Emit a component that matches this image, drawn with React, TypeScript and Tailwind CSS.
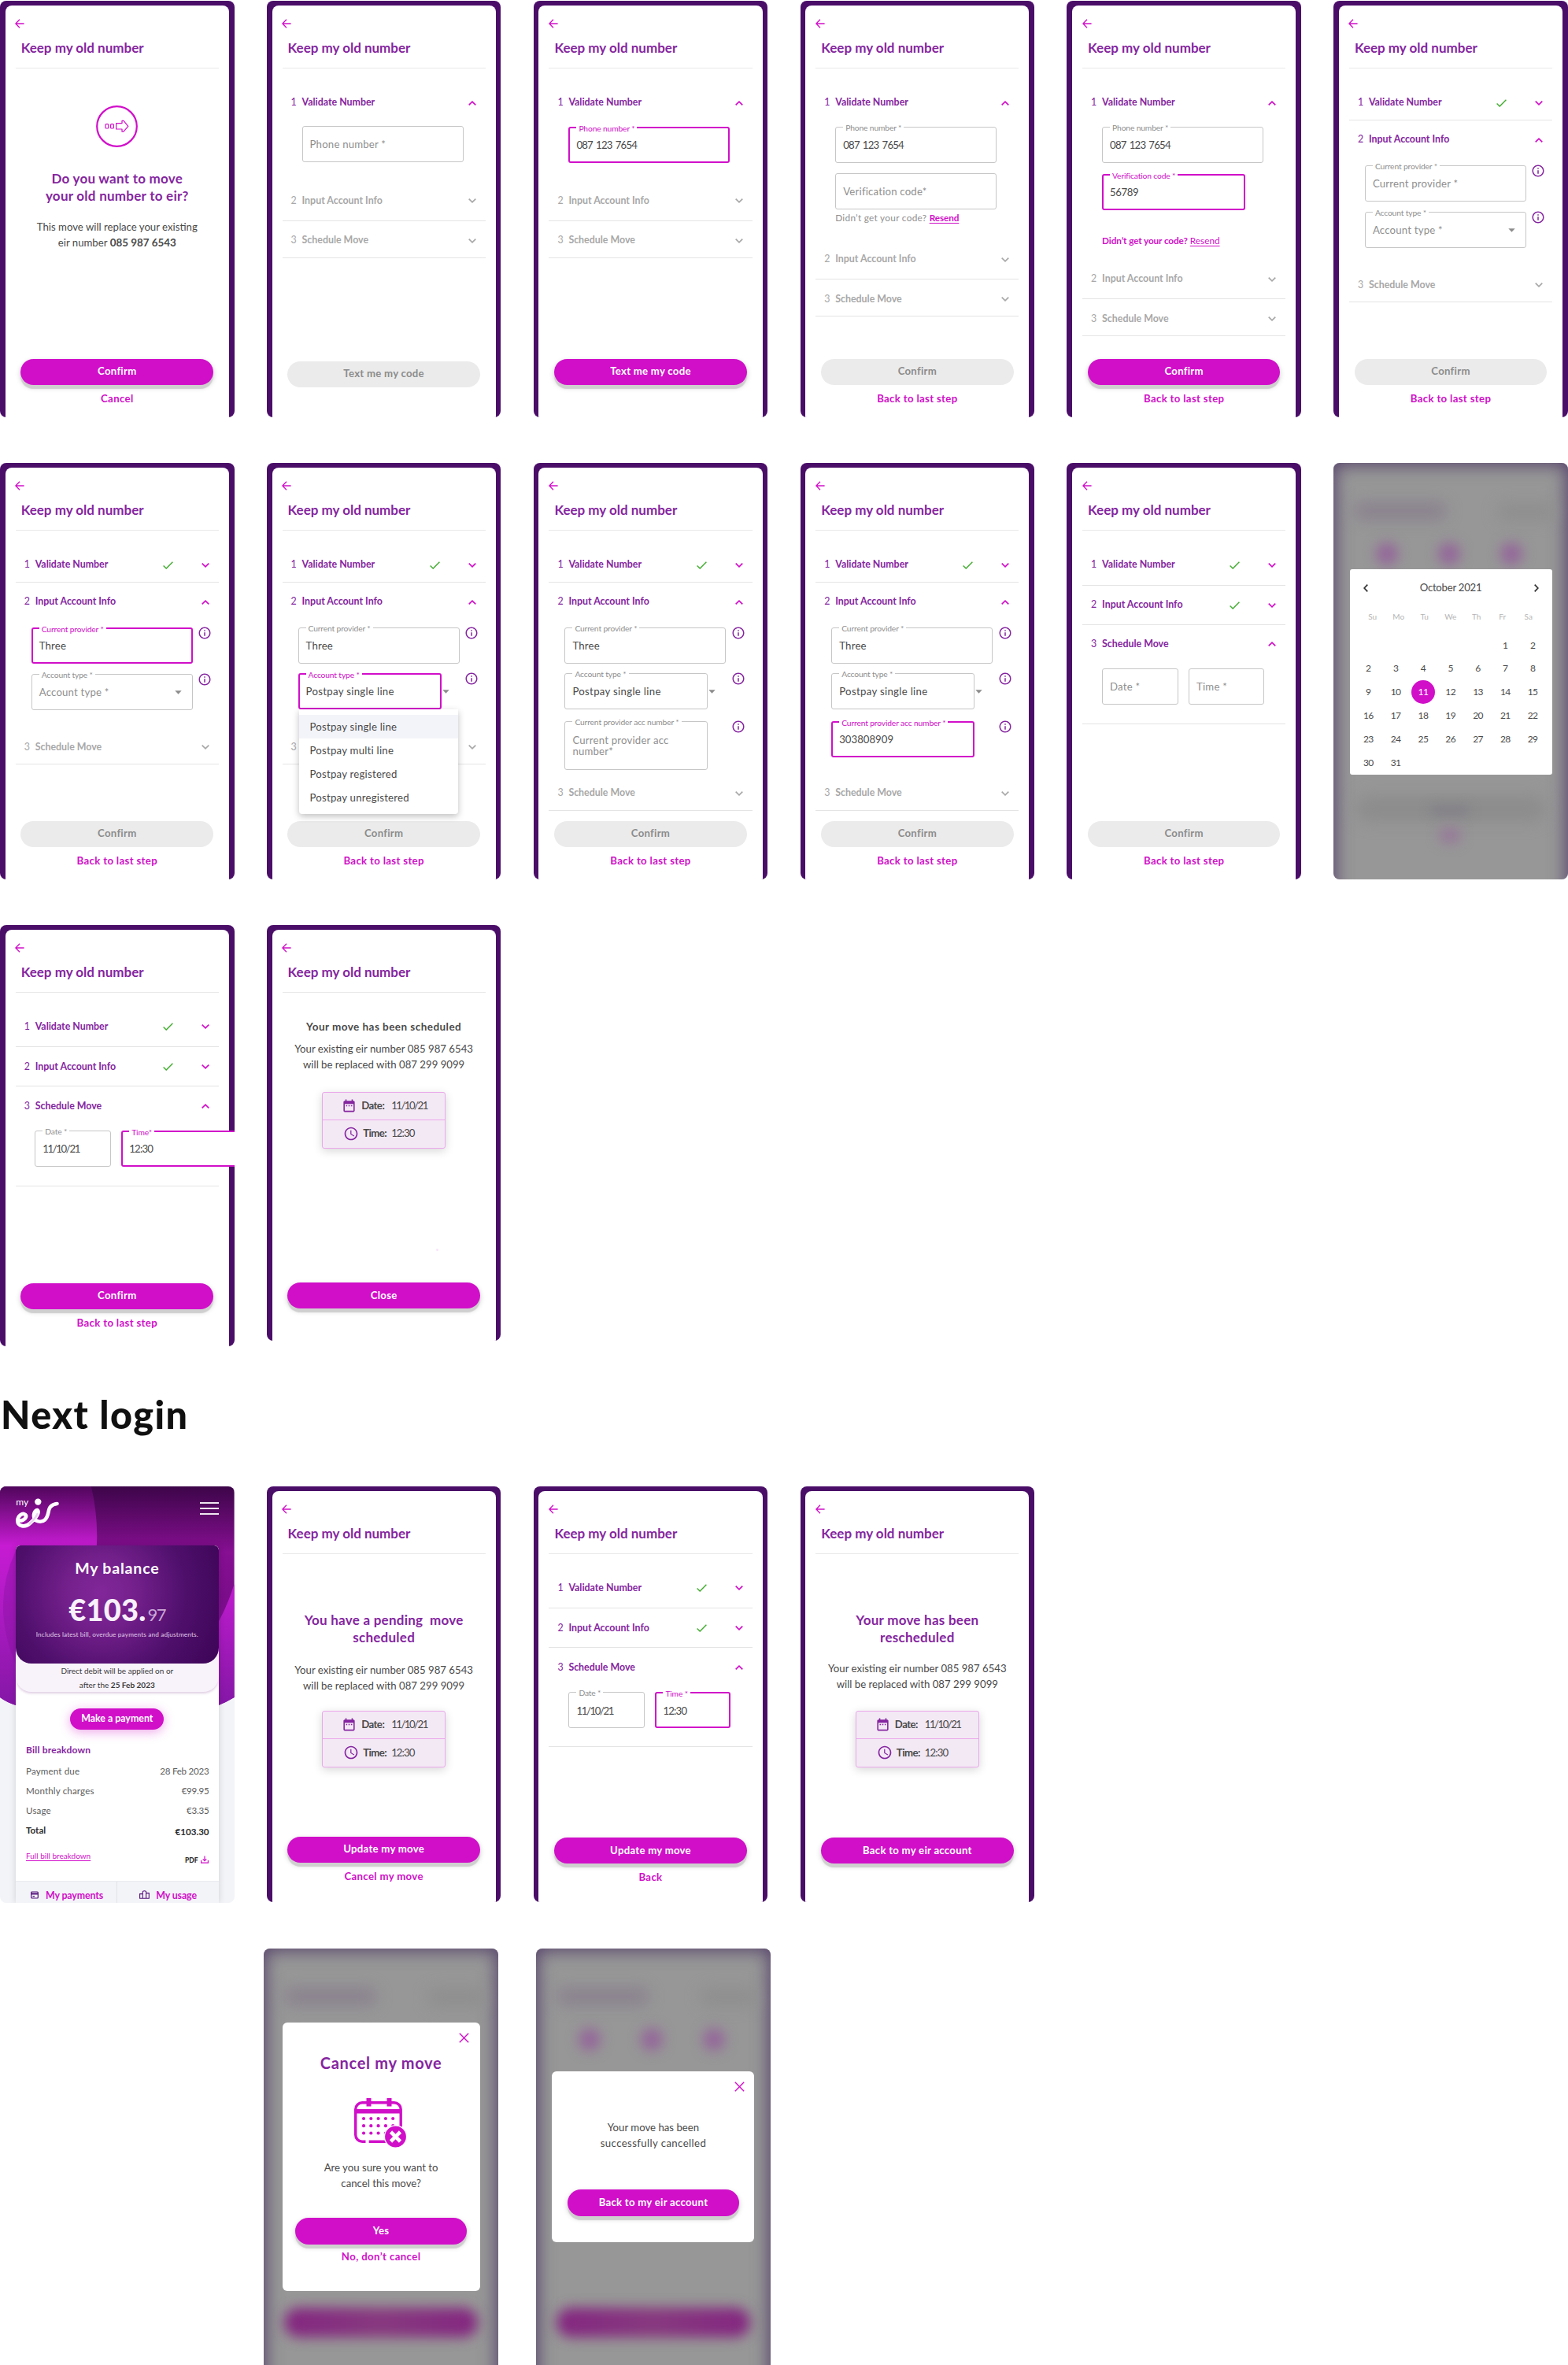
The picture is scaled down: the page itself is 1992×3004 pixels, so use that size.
import type { ReactNode } from "react";
import { MdAccessTime, MdDateRange, MdInfoOutline } from "react-icons/md";

function BackArrow() {
  return (
    <svg className="ml-[-0.5px] h-[12px] w-[12px] text-[#d10fc9]" viewBox="0 0 12 12" fill="none" stroke="currentColor" strokeWidth="1.3">
      <path d="M11.6 6H1M6 .8L.9 6 6 11.2" />
    </svg>
  );
}

function Chevron({ up = false, muted = false }: { up?: boolean; muted?: boolean }) {
  return (
    <svg
      className={`h-[6px] w-[10px] ${up ? "" : "rotate-180"} ${muted ? "text-[#a8a8a8]" : "text-[#d10fc9]"}`}
      viewBox="0 0 10 6"
      fill="none"
      stroke="currentColor"
      strokeWidth="1.7"
    >
      <path d="M.7 5.4L5 1.2 9.3 5.4" />
    </svg>
  );
}

function Check() {
  return (
    <svg className="h-[10px] w-[13px] text-[#44ad32]" viewBox="0 0 13 10" fill="none" stroke="currentColor" strokeWidth="1.4">
      <path d="M.6 5.6L4.2 9.1 12.4.7" />
    </svg>
  );
}

function Caret() {
  return (
    <svg className="h-[5px] w-[9px] text-[#8c8c8c]" viewBox="0 0 9 5" fill="currentColor">
      <path d="M.3.3H8.7L4.5 4.8Z" />
    </svg>
  );
}

function Info() {
  return <MdInfoOutline className="-mt-[2px] h-[18px] w-[18px] shrink-0 text-[#8525a0]" />;
}

function Close() {
  return (
    <svg className="h-[13px] w-[13px] text-[#d10fc9]" viewBox="0 0 13 13" stroke="currentColor" strokeWidth="1.4">
      <path d="M.8.8L12.2 12.2M12.2.8L.8 12.2" />
    </svg>
  );
}

function Phone({ children, height = "h-[528.5px]" }: { children: ReactNode; height?: string }) {
  return (
    <section className={`w-[297.6px] shrink-0 overflow-hidden rounded-[8px] bg-[#4a0d68] px-[6.7px] pt-[6px] ${height}`}>
      <div className="flex h-full flex-col rounded-t-[8px] bg-white px-[13px]">
        <header className="h-[80px] shrink-0 border-b border-[#e9e9e9] pt-[17px]">
          <BackArrow />
          <h2 className="mt-[14px] pl-[7px] text-[17px] leading-[22px] font-bold text-[#8525a0]">Keep my old number</h2>
        </header>
        {children}
      </div>
    </section>
  );
}

function Step({
  n,
  label,
  mt,
  state = "idle",
}: {
  n: number;
  label?: string;
  mt: string;
  state?: "open" | "done" | "idle";
}) {
  const idle = state === "idle";
  return (
    <div className={`flex h-[20px] shrink-0 items-center pt-[2px] pr-[12px] pl-[11px] text-[12.4px] ${idle ? "text-[#a8a8a8]" : "text-[#8525a0]"} ${mt}`}>
      <span className="w-[14px]">{n}</span>
      <span className="font-bold">{label}</span>
      <span className="ml-auto flex items-center gap-[36px]">
        {state === "done" && <Check />}
        <Chevron up={state === "open"} muted={idle} />
      </span>
    </div>
  );
}

function Rule({ mt }: { mt: string }) {
  return <hr className={`shrink-0 border-t border-[#e4e4e4] ${mt}`} />;
}

function Field({
  label,
  value,
  placeholder,
  active = false,
  size = "w-[205px] h-[46px]",
  caret = false,
  tight = "",
}: {
  label?: string;
  value?: string;
  placeholder?: string;
  active?: boolean;
  size?: string;
  caret?: boolean;
  tight?: string;
}) {
  return (
    <div className={`relative flex shrink-0 items-center rounded-[3px] bg-white pt-px ${active ? "border-2 border-[#d10fc9] px-[8px]" : "border border-[#c6c6c6] px-[9px]"} ${size}`}>
      {label && (
        <span className={`absolute -top-[7px] bg-white px-[3px] text-[10.3px] leading-[14px] tracking-[-0.015em] whitespace-nowrap ${active ? "left-[8px] text-[#d10fc9]" : "left-[9px] text-[#8f8f8f]"}`}>
          {label}
        </span>
      )}
      <span className={`text-[13.2px] leading-[14.5px] ${value ? "text-[#4a4a4a]" : "text-[#8f8f8f]"} ${tight || "tracking-[0.015em]"}`}>
        {value ?? placeholder}
      </span>
      {caret && (
        <span className="mr-[4px] ml-auto">
          <Caret />
        </span>
      )}
    </div>
  );
}

function FieldRow({ mt, children, info = true, pl = "pl-[20px]" }: { mt: string; children: ReactNode; info?: boolean; pl?: string }) {
  return (
    <div className={`flex shrink-0 items-start ${pl} ${mt}`}>
      <div className="flex w-[205px] items-center gap-[1px]">{children}</div>
      {info && (
        <span className="ml-[6.5px]">
          <Info />
        </span>
      )}
    </div>
  );
}

function Button({ children, disabled = false, size = "h-[33px]" }: { children: ReactNode; disabled?: boolean; size?: string }) {
  return (
    <button
      className={`flex w-full shrink-0 items-center justify-center rounded-full text-[13.2px] font-bold tracking-[0.02em] ${
        disabled ? "bg-[#ebebeb] text-[#8c8c8c]" : "bg-[#d10fc9] text-white shadow-[0_5px_1px_#cfcfcf,0_3px_7px_rgba(0,0,0,0.2)]"
      } ${size}`}
    >
      {children}
    </button>
  );
}

function Footer({ action, link, disabled, h = "h-[74px]" }: { action: string; link?: string; disabled?: boolean; h?: string }) {
  return (
    <footer className={`mt-auto shrink-0 px-[6.8px] text-center ${h}`}>
      <Button disabled={disabled}>{action}</Button>
      {link && <a className="mt-[7.5px] block text-[13.2px] leading-[20px] font-bold tracking-[0.026em] text-[#d10fc9]">{link}</a>}
    </footer>
  );
}

function Heading({ mt, children }: { mt: string; children: ReactNode }) {
  return <h3 className={`shrink-0 text-center text-[17px] leading-[22px] font-bold tracking-[0.015em] text-[#8525a0] ${mt}`}>{children}</h3>;
}

function Copy({ mt, children }: { mt: string; children: ReactNode }) {
  return <p className={`shrink-0 text-center text-[13.2px] leading-[20px] text-[#4a4a4a] ${mt}`}>{children}</p>;
}

function MoveCopy({ mt }: { mt: string }) {
  return (
    <Copy mt={mt}>
      Your existing eir number 085 987 6543
      <br />
      will be replaced with 087 299 9099
    </Copy>
  );
}

function Slot({ mt }: { mt: string }) {
  return (
    <div className={`mx-auto w-[157px] shrink-0 divide-y divide-[#eaa8ea] rounded-[3px] border border-[#eaa8ea] bg-[#f3e9f5] text-[13.2px] text-[#4a4a4a] shadow-[0_3px_12px_rgba(0,0,0,0.16)] ${mt}`}>
      <div className="flex h-[35px] items-center pl-[24px]">
        <MdDateRange className="h-[19px] w-[19px] text-[#8525a0]" />
        <b className="ml-[6px] w-[38px] tracking-[-0.04em]">Date:</b>
        <span className="tracking-[-0.115em]">11/10/21</span>
      </div>
      <div className="flex h-[35px] items-center pl-[26px]">
        <MdAccessTime className="h-[20px] w-[20px] text-[#8525a0]" />
        <b className="ml-[5px] w-[36px] tracking-[-0.04em]">Time:</b>
        <span className="tracking-[-0.07em]">12:30</span>
      </div>
    </div>
  );
}

function MoveBadge() {
  return (
    <svg className="mx-auto mt-[47px] h-[53px] w-[53px] shrink-0 text-[#d10fc9]" viewBox="0 0 53 53" fill="none" stroke="currentColor">
      <circle cx="26.5" cy="26.5" r="25.3" strokeWidth="2.2" />
      <g strokeWidth="1.2">
        <rect x="12" y="23.6" width="3.8" height="5.4" rx="1" />
        <rect x="18.6" y="23.6" width="3.8" height="5.4" rx="1" />
        <path d="M33 22.6H25.6V30H33V33.2H35L40.8 26.3 35 19.4H33V22.6Z" strokeLinejoin="round" />
      </g>
    </svg>
  );
}

function ProviderField({ active = false, value }: { active?: boolean; value?: string }) {
  return (
    <FieldRow mt="mt-[23px]">
      <Field label="Current provider *" value={value} placeholder="Current provider *" active={active} />
    </FieldRow>
  );
}

function AccountSteps() {
  return (
    <>
      <Step n={1} label="Validate Number" state="done" mt="mt-[32.5px]" />
      <Rule mt="mt-[12.5px]" />
      <Step n={2} label="Input Account Info" state="open" mt="mt-[13.5px]" />
    </>
  );
}

function PostpayField({ active = false }: { active?: boolean }) {
  return (
    <FieldRow mt="mt-[12.5px]">
      <Field label="Account type *" value="Postpay single line" active={active} size="w-[182px] h-[46px]" tight="tracking-[0.024em]" />
      <Caret />
    </FieldRow>
  );
}

function AccountTypeField() {
  return (
    <FieldRow mt="mt-[13.5px]">
      <Field label="Account type *" placeholder="Account type *" caret />
    </FieldRow>
  );
}

function DoneSteps() {
  return (
    <>
      <Step n={1} label="Validate Number" state="done" mt="mt-[32.5px]" />
      <Rule mt="mt-[16px]" />
      <Step n={2} label="Input Account Info" state="done" mt="mt-[14px]" />
      <Rule mt="mt-[15px]" />
      <Step n={3} label="Schedule Move" state="open" mt="mt-[13.5px]" />
    </>
  );
}

function LaterSteps({ first }: { first: string }) {
  return (
    <>
      <Step n={2} label="Input Account Info" mt={first} />
      <Rule mt="mt-[15.5px]" />
      <Step n={3} label="Schedule Move" mt="mt-[14px]" />
      <Rule mt="mt-[12px]" />
    </>
  );
}

function Resend({ mt, active = false }: { mt: string; active?: boolean }) {
  return (
    <p className={`shrink-0 pl-[25px] text-[11.8px] leading-[16px] ${active ? "text-[#d10fc9]" : "tracking-[0.025em] text-[#8f8f8f]"} ${mt}`}>
      <span className={active ? "font-bold tracking-[-0.01em]" : ""}>Didn’t get your code?</span>{" "}
      <a className={`text-[#d10fc9] underline underline-offset-2 ${active ? "" : "font-bold tracking-[-0.01em]"}`}>Resend</a>
    </p>
  );
}

function Shade({ circles = true, solidButton = false }: { circles?: boolean; solidButton?: boolean }) {
  return (
    <div className="absolute inset-0 overflow-hidden rounded-[8px] bg-[#979797]">
      <div className="absolute -inset-x-0 top-0 -bottom-12 shadow-[inset_0_0_22px_2px_#54406a]" />
      <div className="absolute top-[49px] left-[26px] h-[24px] w-[118px] rounded-full bg-[#8b838f] blur-[9px]" />
      <div className="absolute top-[50px] right-[16px] h-[24px] w-[74px] rounded-full bg-[#8f8f8f] blur-[9px]" />
      {circles && (
        <div className="absolute top-[101px] left-[54px] flex gap-[51px]">
          <i className="h-[29px] w-[28px] rounded-full bg-[#94679a] blur-[8px]" />
          <i className="h-[29px] w-[28px] rounded-full bg-[#94679a] blur-[8px]" />
          <i className="h-[29px] w-[28px] rounded-full bg-[#94679a] blur-[8px]" />
        </div>
      )}
      {solidButton ? (
        <div className="absolute bottom-[46px] left-[26px] h-[38px] w-[246px] rounded-full bg-[linear-gradient(90deg,#842680,#87387f_50%,#842680)] blur-[8px]" />
      ) : (
        <>
          <div className="absolute bottom-[74px] left-[28px] h-[32px] w-[242px] rounded-full bg-[#8c8c8c] blur-[10px]" />
          <div className="absolute bottom-[82px] left-[122px] h-[12px] w-[52px] rounded-full bg-[#827f87] blur-[7px]" />
          <div className="absolute bottom-[46px] left-[134px] h-[20px] w-[28px] rounded-full bg-[#967899] blur-[8px]" />
        </>
      )}
    </div>
  );
}

const weeks: (number | null)[][] = [
  [null, null, null, null, null, 1, 2],
  [2, 3, 4, 5, 6, 7, 8],
  [9, 10, 11, 12, 13, 14, 15],
  [16, 17, 18, 19, 20, 21, 22],
  [23, 24, 25, 26, 27, 28, 29],
  [30, 31, null, null, null, null, null],
];

function CalendarPhone() {
  return (
    <section className="relative h-[528.5px] w-[297.6px] shrink-0 pt-[135.3px]">
      <Shade />
      <div className="relative mx-auto h-[260.3px] w-[257px] rounded-[3px] bg-white text-[#4a4a4a]">
        <div className="flex h-[48px] items-center justify-between px-[17px]">
          <svg className="h-[10px] w-[6px]" viewBox="0 0 6 10" fill="none" stroke="#333" strokeWidth="1.7">
            <path d="M5.3.7L1.2 5 5.3 9.3" />
          </svg>
          <span className="text-[13.2px] tracking-[-0.02em]">October 2021</span>
          <svg className="h-[10px] w-[6px]" viewBox="0 0 6 10" fill="none" stroke="#333" strokeWidth="1.7">
            <path d="M.7.7L4.8 5 .7 9.3" />
          </svg>
        </div>
        <div className="mt-[4px] grid w-[243.7px] grid-cols-7 pl-[12.7px] text-center text-[10px] leading-[16px] text-[#b5b5b5]">
          {["Su", "Mo", "Tu", "We", "Th", "Fr", "Sa"].map((d) => (
            <span key={d}>{d}</span>
          ))}
        </div>
        <div className="mt-[13.5px] grid w-[250px] grid-cols-7 pl-[6.4px] text-[12px] tracking-[-0.05em]">
          {weeks.flat().map((d, i) => (
            <span
              key={i}
              className={`mx-auto flex h-[29.8px] w-[29.8px] items-center justify-center ${d === 11 ? "rounded-full bg-[#d10fc9] text-white" : ""}`}
            >
              {d}
            </span>
          ))}
        </div>
      </div>
    </section>
  );
}

function HeroArt() {
  return (
    <svg className="absolute inset-x-0 top-0 h-[280px] w-full" viewBox="0 0 298 280" preserveAspectRatio="none">
      <defs>
        <linearGradient id="top" x1="0" y1="0" x2="0" y2="1">
          <stop offset="0" stopColor="#3d0549" />
          <stop offset=".3" stopColor="#860f92" />
          <stop offset=".5" stopColor="#7b0d8a" />
          <stop offset="1" stopColor="#8417a6" />
        </linearGradient>
        <linearGradient id="left" x1="0" y1="0" x2="0" y2="1">
          <stop offset="0" stopColor="#50065c" />
          <stop offset=".27" stopColor="#c61bd2" />
          <stop offset=".45" stopColor="#b81bca" />
          <stop offset="1" stopColor="#8417a6" />
        </linearGradient>
        <linearGradient id="right" x1="0" y1="0" x2="0" y2="1">
          <stop offset="0" stopColor="#c01cce" />
          <stop offset="1" stopColor="#8417a6" />
        </linearGradient>
      </defs>
      <path d="M0 0H298V268Q288 274 278 278H20Q8 274 0 268Z" fill="url(#top)" />
      <path d="M0 0H116Q125 38 123 76V278H20Q8 274 0 268Z" fill="url(#left)" />
      <path d="M20 82Q-12 150 20 226Z" fill="#8a14a4" opacity=".45" />
      <path d="M298 124V268Q288 274 278 278V172Q290 150 298 124Z" fill="url(#right)" />
    </svg>
  );
}

function Logo() {
  return (
    <svg className="absolute top-[8px] left-[16px] h-[50px] w-[64px]" viewBox="16 8 64 50" fill="none">
      <text x="20.3" y="23.6" fontFamily="Lato" fontSize="12" fill="#fff">my</text>
      <circle cx="48.3" cy="19.6" r="4.2" fill="#fff" />
      <path
        d="M25 43.5C31 43.5 35 38.5 32 35.8C28.5 33 22.5 37.5 22.3 43.5C22.3 51 32 52.5 38 47C43 42.5 49.5 35.5 48.5 31.5C47.5 27.5 42.5 32 43 38C43.5 45 52.5 46.5 57 42.5C62.5 37.5 60.5 30 64 26C66.5 23.2 70 22.2 72.5 22"
        stroke="#fff"
        strokeWidth="4.6"
        strokeLinecap="round"
        strokeLinejoin="round"
      />
      <path d="M37.5 47.5C42 43.5 46 38.5 47.5 35" stroke="#dcb4e4" strokeWidth="2.5" strokeLinecap="round" opacity=".6" />
    </svg>
  );
}

function Dashboard() {
  const rows = [
    ["Payment due", "28 Feb 2023"],
    ["Monthly charges", "€99.95"],
    ["Usage", "€3.35"],
  ];
  return (
    <section className="relative h-[529px] w-[297.6px] shrink-0 overflow-hidden rounded-[8px] bg-[#f3f4f8] pt-[74.7px]">
      <HeroArt />
      <Logo />
      <div className="absolute top-[20px] right-[20px] flex w-[24px] flex-col gap-[5px]">
        <i className="h-[2px] bg-white/90" />
        <i className="h-[2px] bg-white/90" />
        <i className="h-[2px] bg-white/90" />
      </div>
      <div className="relative mx-[20px] flex h-full flex-col rounded-t-[6px] bg-white shadow-[0_0_8px_rgba(0,0,0,0.15)]">
        <div className="h-[186.7px] shrink-0 rounded-t-[6px] rounded-b-[20px] bg-[#f8f3fb] text-center text-[10px] leading-[17.5px] text-[#3a3a3a] shadow-[0_2px_3px_rgba(120,40,130,0.22)]">
          <div className="mb-[1px] flex h-[150.7px] flex-col items-center rounded-t-[6px] rounded-b-[20px] bg-[radial-gradient(circle_at_42%_40%,#82279a_0%,#74208c_25%,#4e0f6b_62%,#3c0456_100%)] text-white">
            <h2 className="mt-[17px] text-[19.5px] leading-[24px] font-bold tracking-[0.042em]">My balance</h2>
            <p className="mt-[20px] flex h-[40px] items-baseline leading-[40px]">
              <b className="text-[38px] font-black tracking-[0.005em] text-[#f8f0fb]">€103.</b>
              <span className="ml-[2px] text-[22px] tracking-[-0.06em] text-[#c9a7d6]">97</span>
            </p>
            <p className="mt-[6px] text-[8.2px] leading-[12px] tracking-[0.02em] text-[#e0cbe8]">
              Includes latest bill, overdue payments and adjustments.
            </p>
          </div>
          Direct debit will be applied on or
          <br />
          after the <b>25 Feb 2023</b>
        </div>
        <button className="mx-auto mt-[20.5px] h-[27px] w-[119px] shrink-0 rounded-full bg-[#d10fc9] text-[12.4px] font-bold text-white shadow-[0_3px_14px_rgba(209,15,201,0.38)]">
          Make a payment
        </button>
        <div className="px-[13px] pr-[12px] text-[11.6px] text-[#5c5c5c]">
          <h3 className="mt-[18px] text-[12px] leading-[16px] font-bold tracking-[0.016em] text-[#8525a0]">Bill breakdown</h3>
          <dl className="mt-[6px]">
            {rows.map(([k, v]) => (
              <div key={k} className="flex h-[25px] items-center justify-between">
                <dt className="tracking-[0.012em]">{k}</dt>
                <dd className="tracking-[-0.02em]">{v}</dd>
              </div>
            ))}
            <div className="flex h-[25px] items-center justify-between font-bold text-[#2c2c2c]">
              <dt>Total</dt>
              <dd className="pt-[4px]">€103.30</dd>
            </div>
          </dl>
          <div className="mt-[12px] flex items-start justify-between">
            <a className="text-[10px] leading-[16px] text-[#d10fc9] underline underline-offset-2">Full bill breakdown</a>
            <span className="mt-[7px] flex items-center gap-[3px] pr-[1px] text-[8.5px] leading-[14px] font-black text-[#2c2c2c]">
              PDF
              <svg className="mb-[2px] h-[10px] w-[10px]" viewBox="0 0 10 10" fill="none" stroke="#d10fc9" strokeWidth="1.2">
                <path d="M.6 6V9.2H9.4V6M5 .4V6.4M2.7 4.3L5 6.6 7.3 4.3" />
              </svg>
            </span>
          </div>
        </div>
        <nav className="mt-[19px] grid h-[60px] shrink-0 grid-cols-2 divide-x divide-[#e2e3e9] border-t border-[#eaebf0] bg-[#f3f4f8] text-[12.4px] font-bold tracking-[-0.01em] text-[#d10fc9]">
          <span className="flex h-[36px] items-center gap-[9px] pl-[19px]">
            <svg className="mb-[2px] h-[10px] w-[10px]" viewBox="0 0 10 10" fill="none" stroke="#54107a" strokeWidth="1.2">
              <rect x=".7" y="1" width="8.6" height="8" rx="1" />
              <path d="M.7 3.4H9.3" strokeWidth="2" />
              <path d="M2.5 6.6H5" />
            </svg>
            My payments
          </span>
          <span className="flex h-[36px] items-center gap-[8px] pl-[28.5px]">
            <svg className="mb-[2px] h-[11px] w-[13px]" viewBox="0 0 13 11" fill="none" stroke="#54107a" strokeWidth="1.1">
              <path d="M.6 10.3V4.6H4.3V10.3ZM4.3 10.3V1.7Q4.3.7 6.5.7 8.6.7 8.6 1.7V10.3ZM8.6 10.3V3.6H12.3V10.3Z" />
            </svg>
            My usage
          </span>
        </nav>
      </div>
    </section>
  );
}

function CancelIcon() {
  return (
    <svg className="mt-[32px] ml-[91px] h-[63px] w-[67px] shrink-0" viewBox="0 0 67 63" fill="none">
      <rect x="1.7" y="5.7" width="57.5" height="49.5" rx="8.5" stroke="#d10fc9" strokeWidth="3.4" />
      <path d="M1.5 16.8H59.5" stroke="#d10fc9" strokeWidth="5.5" />
      <path d="M18.5 0V10.5M44.5 0V10.5" stroke="#d10fc9" strokeWidth="6" />
      <path d="M14.5 55.2H18.7" stroke="#fff" strokeWidth="5" />
      <g fill="#d10fc9">
        {[26, 35.2, 44.5].map((y) =>
          [12, 21.3, 30.6, 39.9, 49.2].map((x) => <circle key={`${x}-${y}`} cx={x} cy={y} r="2.1" />),
        )}
      </g>
      <circle cx="52.5" cy="49" r="14.7" fill="#fff" />
      <circle cx="52.5" cy="49" r="13.4" fill="#d10fc9" />
      <path d="M46.5 43L58.5 55M58.5 43L46.5 55" stroke="#fff" strokeWidth="4.6" />
    </svg>
  );
}

export default function App() {
  return (
    <main className="h-[3004px] w-[1992px] overflow-hidden bg-white pt-[1px] font-['Lato',sans-serif]">
      <div className="flex gap-[41.25px]">
        <Phone>
          <MoveBadge />
          <Heading mt="mt-[29px]">
            Do you want to move
            <br />
            your old number to eir?
          </Heading>
          <Copy mt="mt-[18px]">
            This move will replace your existing
            <br />
            eir number <b className="text-[13.4px]">085 987 6543</b>
          </Copy>
          <Footer action="Confirm" link="Cancel" />
        </Phone>

        <Phone>
          <Step n={1} label="Validate Number" state="open" mt="mt-[32.5px]" />
          <FieldRow mt="mt-[20.5px]" info={false} pl="pl-[25px]">
            <Field placeholder="Phone number *" />
          </FieldRow>
          <LaterSteps first="mt-[38px]" />
          <Footer action="Text me my code" disabled h="h-[71px]" />
        </Phone>

        <Phone>
          <Step n={1} label="Validate Number" state="open" mt="mt-[32.5px]" />
          <FieldRow mt="mt-[21px]" info={false} pl="pl-[25px]">
            <Field label="Phone number *" value="087 123 7654" active tight="tracking-[-0.06em] [word-spacing:1.5px]" />
          </FieldRow>
          <LaterSteps first="mt-[37.5px]" />
          <Footer action="Text me my code" />
        </Phone>

        <Phone>
          <Step n={1} label="Validate Number" state="open" mt="mt-[32.5px]" />
          <FieldRow mt="mt-[21px]" info={false} pl="pl-[25px]">
            <Field label="Phone number *" value="087 123 7654" tight="tracking-[-0.06em] [word-spacing:1.5px]" />
          </FieldRow>
          <FieldRow mt="mt-[13px]" info={false} pl="pl-[25px]">
            <Field placeholder="Verification code*" />
          </FieldRow>
          <Resend mt="mt-[3.5px]" />
          <LaterSteps first="mt-[33.5px]" />
          <Footer action="Confirm" link="Back to last step" disabled />
        </Phone>

        <Phone>
          <Step n={1} label="Validate Number" state="open" mt="mt-[32.5px]" />
          <FieldRow mt="mt-[21px]" info={false} pl="pl-[25px]">
            <Field label="Phone number *" value="087 123 7654" tight="tracking-[-0.06em] [word-spacing:1.5px]" />
          </FieldRow>
          <FieldRow mt="mt-[14px]" info={false} pl="pl-[25px]">
            <Field label="Verification code *" value="56789" active size="w-[182px] h-[46px]" tight="tracking-[-0.03em]" />
          </FieldRow>
          <Resend mt="mt-[31.5px]" active />
          <LaterSteps first="mt-[29.5px]" />
          <Footer action="Confirm" link="Back to last step" />
        </Phone>

        <Phone>
          <AccountSteps />
          <ProviderField />
          <AccountTypeField />
          <Step n={3} label="Schedule Move" mt="mt-[36px]" />
          <Rule mt="mt-[12px]" />
          <Footer action="Confirm" link="Back to last step" disabled />
        </Phone>
      </div>

      <div className="mt-[58.5px] flex gap-[41.25px]">
        <Phone>
          <AccountSteps />
          <ProviderField value="Three" active />
          <AccountTypeField />
          <Step n={3} label="Schedule Move" mt="mt-[36px]" />
          <Rule mt="mt-[12px]" />
          <Footer action="Confirm" link="Back to last step" disabled />
        </Phone>

        <Phone>
          <AccountSteps />
          <ProviderField value="Three" />
          <div className="relative shrink-0">
            <PostpayField active />
            <ul className="absolute top-full left-[21.5px] z-10 h-[133px] w-[202px] rounded-b-[4px] bg-white pt-[7px] text-[13.2px] leading-[30px] tracking-[0.018em] text-[#4a4a4a] shadow-[0_3px_8px_rgba(0,0,0,0.25)]">
              <li className="bg-[#f3f4f9] pl-[13.5px]">Postpay single line</li>
              <li className="pl-[13.5px]">Postpay multi line</li>
              <li className="pl-[13.5px]">Postpay registered</li>
              <li className="pl-[13.5px]">Postpay unregistered</li>
            </ul>
          </div>
          <Step n={3} mt="mt-[37px]" />
          <Rule mt="mt-[12px]" />
          <Footer action="Confirm" link="Back to last step" disabled />
        </Phone>

        <Phone>
          <AccountSteps />
          <ProviderField value="Three" />
          <PostpayField />
          <FieldRow mt="mt-[14.5px]">
            <Field
              label="Current provider acc number *"
              placeholder="Current provider acc number*"
              size="w-[182px] h-[62px]"
            />
          </FieldRow>
          <Step n={3} label="Schedule Move" mt="mt-[19px]" />
          <Rule mt="mt-[12px]" />
          <Footer action="Confirm" link="Back to last step" disabled />
        </Phone>

        <Phone>
          <AccountSteps />
          <ProviderField value="Three" />
          <PostpayField />
          <FieldRow mt="mt-[14.5px]">
            <Field label="Current provider acc number *" value="303808909" active size="w-[182px] h-[46px]" tight="tracking-[0]" />
          </FieldRow>
          <Step n={3} label="Schedule Move" mt="mt-[35px]" />
          <Rule mt="mt-[12px]" />
          <Footer action="Confirm" link="Back to last step" disabled />
        </Phone>

        <Phone>
          <DoneSteps />
          <div className="mt-[21.5px] flex shrink-0 gap-[13.5px] pl-[25px]">
            <Field placeholder="Date *" size="w-[96.5px] h-[46px]" />
            <Field placeholder="Time *" size="w-[96px] h-[46px]" />
          </div>
          <Rule mt="mt-[24px]" />
          <Footer action="Confirm" link="Back to last step" disabled />
        </Phone>

        <CalendarPhone />
      </div>

      <div className="mt-[58.4px] flex h-[535.6px] items-start gap-[41.25px]">
        <Phone height="h-[535.6px]">
          <DoneSteps />
          <div className="mt-[22px] flex shrink-0 gap-[13.5px] pl-[24.5px]">
            <Field label="Date *" value="11/10/21" size="w-[96.5px] h-[46px]" tight="tracking-[-0.105em]" />
            <Field label="Time*" value="12:30" active size="w-[205px] h-[46px]" tight="tracking-[-0.06em]" />
          </div>
          <Rule mt="mt-[24px]" />
          <Footer action="Confirm" link="Back to last step" h="h-[80.6px]" />
        </Phone>

        <Phone>
          <h3 className="mt-[33px] shrink-0 text-center text-[13.5px] leading-[20px] font-bold tracking-[0.034em] whitespace-nowrap text-[#4a4a4a]">
            Your move has been scheduled
          </h3>
          <MoveCopy mt="mt-[8.5px]" />
          <Slot mt="mt-[24.5px]" />
          <i className="mt-[127px] ml-[195px] h-[3px] w-[3px] shrink-0 rounded-full bg-[#f9e4fa]" />
          <Footer action="Close" />
        </Phone>
      </div>

      <h1 className="mt-[56px] pl-[1px] text-[48.5px] leading-[60px] font-black tracking-[0.03em] text-[#101010]">Next login</h1>

      <div className="mt-[61.5px] flex gap-[41.25px]">
        <Dashboard />

        <Phone>
          <Heading mt="mt-[73px]">
            You have a pending&nbsp; move
            <br />
            scheduled
          </Heading>
          <MoveCopy mt="mt-[20px]" />
          <Slot mt="mt-[22px]" />
          <Footer action="Update my move" link="Cancel my move" h="h-[83.6px]" />
        </Phone>

        <Phone>
          <DoneSteps />
          <div className="mt-[22.5px] flex shrink-0 gap-[13.5px] pl-[25px]">
            <Field label="Date *" value="11/10/21" size="w-[96.5px] h-[46px]" tight="tracking-[-0.105em]" />
            <Field label="Time *" value="12:30" active size="w-[96px] h-[46px]" tight="tracking-[-0.06em]" />
          </div>
          <Rule mt="mt-[23px]" />
          <Footer action="Update my move" link="Back" h="h-[82.5px]" />
        </Phone>

        <Phone>
          <Heading mt="mt-[73px]">
            Your move has been
            <br />
            rescheduled
          </Heading>
          <MoveCopy mt="mt-[18.5px]" />
          <Slot mt="mt-[23.5px]" />
          <Footer action="Back to my eir account" h="h-[82px]" />
        </Phone>
      </div>

      <div className="mt-[58px] flex gap-[48.4px] pl-[335.2px]">
        <section className="relative h-[540px] w-[297.6px] shrink-0 pt-[94.5px]">
          <Shade circles={false} solidButton />
          <div className="relative ml-[23.4px] flex h-[341px] w-[251px] flex-col rounded-[6px] bg-white px-[16.5px]">
            <div className="mt-[13px] -mr-[3px] ml-auto">
              <Close />
            </div>
            <h2 className="mt-[12px] text-center text-[20px] leading-[26px] font-bold tracking-[0.035em] text-[#8525a0]">Cancel my move</h2>
            <div className="-ml-[16.5px]">
              <CancelIcon />
            </div>
            <Copy mt="mt-[15px]">
              Are you sure you want to
              <br />
              cancel this move?
            </Copy>
            <div className="mt-[33.5px]">
              <Button size="h-[34px]">Yes</Button>
            </div>
            <a className="mt-[5.5px] text-center text-[13.2px] leading-[20px] font-bold tracking-[0.03em] text-[#d10fc9]">No, don’t cancel</a>
          </div>
        </section>

        <section className="relative h-[540px] w-[297.6px] shrink-0 pt-[155.7px]">
          <Shade solidButton />
          <div className="relative mx-auto flex h-[217.6px] w-[257px] flex-col rounded-[6px] bg-white px-[19.5px]">
            <div className="mt-[13px] -mr-[7px] ml-auto">
              <Close />
            </div>
            <Copy mt="mt-[35px]">
              Your move has been
              <br />
              <span className="tracking-[0.03em]">successfully cancelled</span>
            </Copy>
            <div className="mt-[49px]">
              <Button size="h-[34px]">Back to my eir account</Button>
            </div>
          </div>
        </section>
      </div>
    </main>
  );
}
